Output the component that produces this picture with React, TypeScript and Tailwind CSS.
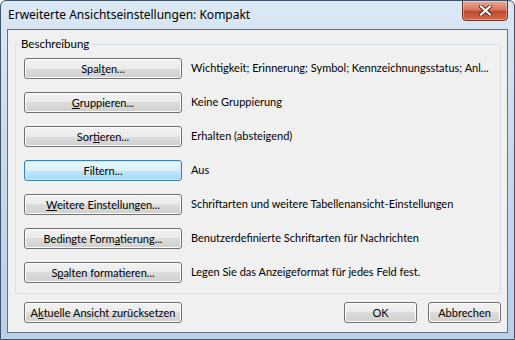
import React from 'react';

type Row = {
  pre: string;
  key?: string;
  post: string;
  desc: string;
  focused?: boolean;
};

const rows: Row[] = [
  { pre: 'Spal', key: 't', post: 'en...', desc: 'Wichtigkeit; Erinnerung; Symbol; Kennzeichnungsstatus; Anl...' },
  { pre: '', key: 'G', post: 'ruppieren...', desc: 'Keine Gruppierung' },
  { pre: 'Sor', key: 't', post: 'ieren...', desc: 'Erhalten (absteigend)' },
  { pre: 'Filtern...', post: '', desc: 'Aus', focused: true },
  { pre: '', key: 'W', post: 'eitere Einstellungen...', desc: 'Schriftarten und weitere Tabellenansicht-Einstellungen' },
  { pre: 'Bedingte Form', key: 'a', post: 'tierung...', desc: 'Benutzerdefinierte Schriftarten für Nachrichten' },
  { pre: 'S', key: 'p', post: 'alten formatieren...', desc: 'Legen Sie das Anzeigeformat für jedes Feld fest.' },
];

const WinButton: React.FC<{ className?: string; focused?: boolean; children: React.ReactNode }> = ({
  className = '',
  focused,
  children,
}) => (
  <button
    className={`h-[21px] shrink-0 rounded-[3px] border flex items-center justify-center leading-none whitespace-nowrap ${
      focused
        ? 'border-[#3c7fb1] bg-[linear-gradient(to_bottom,#eaf6fd_0%,#d9f0fc_50%,#bee6fd_50%,#a7d9f5_100%)] shadow-[inset_0_0_0_1px_#c8e9fb]'
        : 'border-[#707070] bg-[linear-gradient(to_bottom,#f2f2f2_0%,#ebebeb_50%,#dddddd_50%,#cfcfcf_100%)] shadow-[inset_0_0_0_1px_#fcfcfc]'
    } ${className}`}
  >
    {children}
  </button>
);

export default function App() {
  return (
    <div className="w-[515px] h-[340px] flex flex-col border border-[#3f5268] rounded-t-[6px] bg-[linear-gradient(to_bottom,#dbe8f5,#c9dcef_40%,#b9d0e8)] font-['Lato','Noto_Sans',sans-serif] text-[11px] text-black overflow-hidden">
      <div className="relative h-[28px] shrink-0">
        <div className="pl-[7px] pt-[6px] leading-[16px] text-[12px] font-['Noto_Sans',sans-serif] text-black">
          Erweiterte Ansichtseinstellungen: Kompakt
        </div>
        <div className="absolute top-[-1px] right-[6px] w-[46px] h-[21px] rounded-b-[4px] border border-[#6b2f24] bg-[linear-gradient(to_bottom,#e9a99a_0%,#d9765f_45%,#c14a2f_55%,#cf6b4f_100%)] shadow-[inset_0_0_0_1px_rgba(255,255,255,0.35)] flex items-center justify-center">
          <svg width="13" height="11" viewBox="0 0 13 11">
            <path d="M2 1.5 L11 9.5 M11 1.5 L2 9.5" stroke="#5a1f14" strokeWidth="4" strokeLinecap="square" />
            <path d="M2 1.5 L11 9.5 M11 1.5 L2 9.5" stroke="#ffffff" strokeWidth="2.2" strokeLinecap="square" />
          </svg>
        </div>
      </div>
      <div className="flex-1 mx-[6px] mb-[6px] border border-[#5f7185] bg-[#f0f0f0] flex flex-col pl-[7px] pr-[6px] pt-[6px]">
        <fieldset className="border border-[#d5dfe5] rounded-[3px] pl-[3px] pb-[10px]">
          <legend className="px-[2px] leading-[16px] text-[11.5px]">Beschreibung</legend>
          <div className="pl-[5px] mt-[6px] flex flex-col gap-[13px]">
            {rows.map((r, i) => (
              <div key={i} className="flex items-center">
                <WinButton className="w-[158px]" focused={r.focused}>
                  <span>
                    {r.pre}
                    {r.key && <span className="underline underline-offset-1">{r.key}</span>}
                    {r.post}
                  </span>
                </WinButton>
                <span className="ml-[9px] whitespace-nowrap">{r.desc}</span>
              </div>
            ))}
          </div>
        </fieldset>
        <div className="flex items-center mt-[8px] pl-[9px]">
          <WinButton className="w-[158px]">
            <span>
              A<span className="underline underline-offset-1">k</span>tuelle Ansicht zurücksetzen
            </span>
          </WinButton>
          <div className="ml-auto flex gap-[11px]">
            <WinButton className="w-[73px]">OK</WinButton>
            <WinButton className="w-[73px]">Abbrechen</WinButton>
          </div>
        </div>
      </div>
    </div>
  );
}
